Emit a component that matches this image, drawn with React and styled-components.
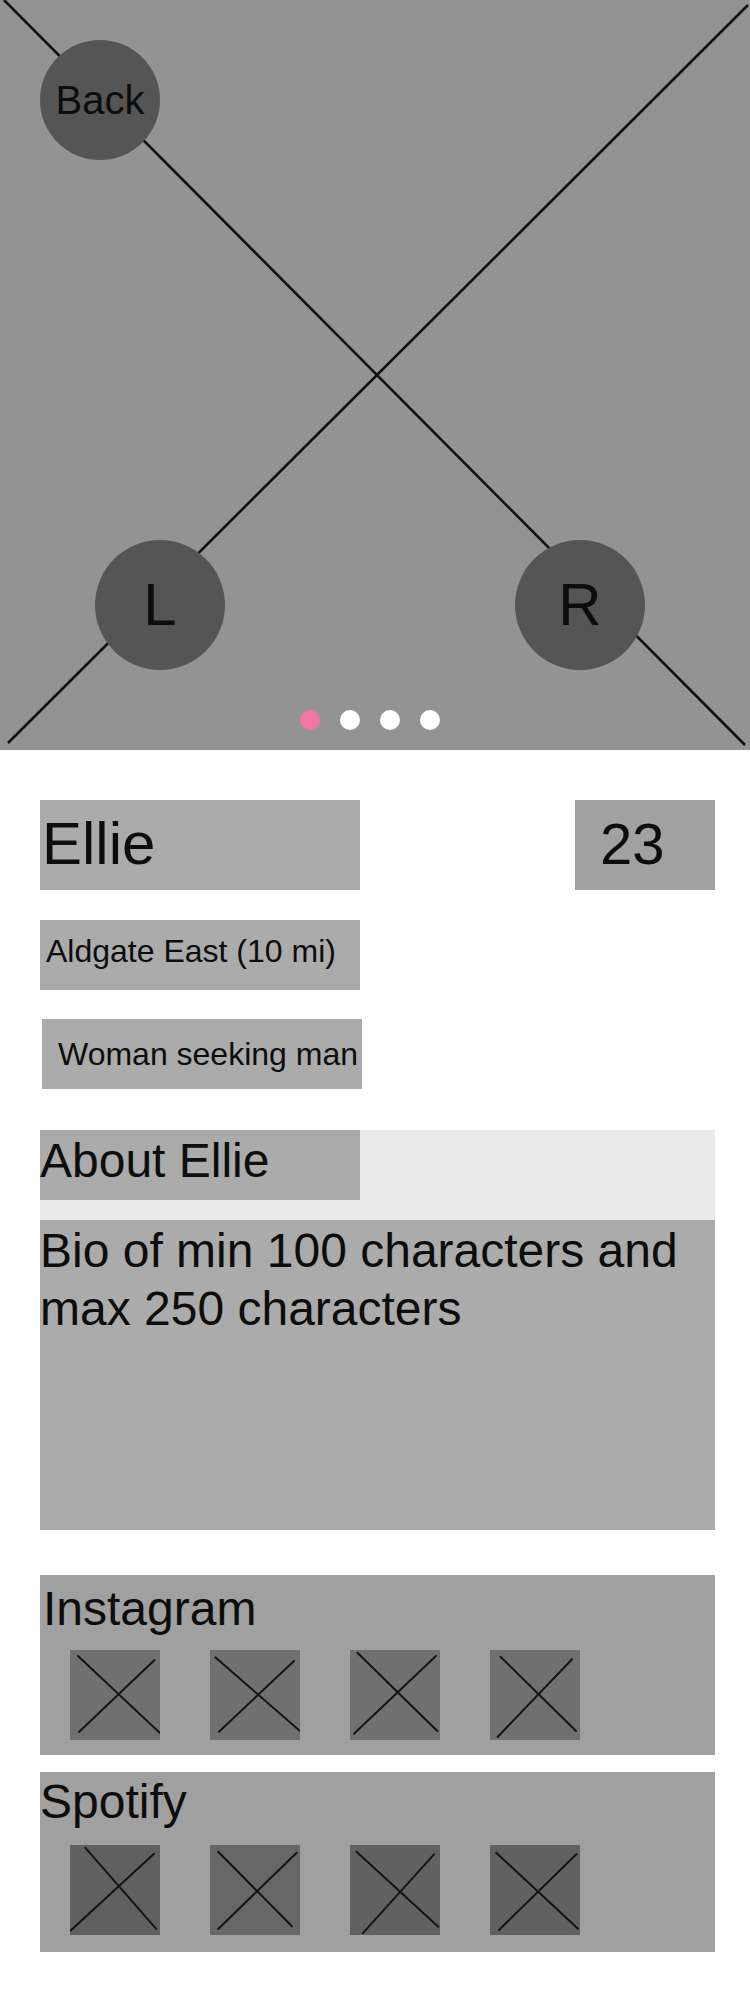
import React from "react";
import styled, { createGlobalStyle } from "styled-components";

const GlobalStyle = createGlobalStyle`
  html, body { margin: 0; padding: 0; background: #ffffff; }
  body { font-family: "Liberation Sans", Arial, Helvetica, sans-serif; color: #0d0d0d; }
  * { box-sizing: border-box; }
`;

const Page = styled.div`
  width: 750px;
  background: #ffffff;
  padding-bottom: 48px;
`;

/* ---------- Hero / photo placeholder ---------- */
const Hero = styled.header`
  position: relative;
  height: 750px;
  background: #939393;
  display: flex;
  flex-direction: column;
  padding: 40px 0 20px;
`;

const HeroCross = styled.svg`
  position: absolute;
  inset: 0;
  width: 100%;
  height: 100%;
  pointer-events: none;
`;

const RoundButton = styled.button`
  position: relative;
  width: ${(p) => p.$size}px;
  height: ${(p) => p.$size}px;
  border-radius: 50%;
  border: none;
  padding: 0;
  background: #555555;
  color: #0d0d0d;
  font-family: "Liberation Sans", Arial, sans-serif;
  font-size: ${(p) => p.$font}px;
  line-height: 1;
  display: flex;
  align-items: center;
  justify-content: center;
  cursor: pointer;
`;

const BackRow = styled.div`
  display: flex;
  padding-left: 40px;
`;

const NavRow = styled.div`
  margin-top: auto;
  display: flex;
  justify-content: space-between;
  padding: 0 105px 0 95px;
`;

const DotRow = styled.div`
  position: relative;
  margin-top: 40px;
  display: flex;
  justify-content: center;
  gap: 20px;
  padding-right: 10px;
`;

const Dot = styled.span`
  width: 20px;
  height: 20px;
  border-radius: 50%;
  background: ${(p) => (p.$active ? "#f075a9" : "#ffffff")};
`;

/* ---------- Profile details ---------- */
const Details = styled.section`
  display: flex;
  flex-direction: column;
  padding: 50px 35px 0 40px;
`;

const NameRow = styled.div`
  display: flex;
  justify-content: space-between;
  height: 90px;
`;

const BigField = styled.div`
  width: ${(p) => p.$width}px;
  height: 90px;
  background: ${(p) => p.$bg};
  display: flex;
  align-items: center;
  padding: 0 0 4px ${(p) => p.$pad}px;
  font-size: ${(p) => p.$font}px;
`;

const Chip = styled.div`
  width: 320px;
  height: 70px;
  margin-top: ${(p) => p.$top}px;
  margin-left: ${(p) => p.$indent}px;
  padding: 0 0 ${(p) => p.$lift}px ${(p) => p.$pad}px;
  background: #ababab;
  display: flex;
  align-items: center;
  font-size: 32px;
  white-space: nowrap;
`;

const AboutBar = styled.div`
  margin-top: 41px;
  height: 90px;
  background: #eaeaea;
`;

const AboutTitle = styled.h2`
  margin: 0;
  width: 320px;
  height: 70px;
  padding-top: 3px;
  background: #ababab;
  font-size: 48px;
  font-weight: 400;
  line-height: 55px;
`;

const Bio = styled.p`
  margin: 0;
  height: 310px;
  padding-top: 2px;
  background: #ababab;
  font-size: 48px;
  line-height: 1.2;
`;

const Panel = styled.section`
  margin-top: ${(p) => p.$top}px;
  height: 180px;
  padding-top: ${(p) => p.$pad}px;
  background: #a0a0a0;
`;

const PanelTitle = styled.h3`
  margin: 0;
  padding-left: ${(p) => p.$indent}px;
  font-size: 48px;
  font-weight: 400;
  line-height: 55px;
`;

const Tiles = styled.div`
  margin-top: ${(p) => p.$gap}px;
  display: flex;
  gap: 50px;
  padding-left: 30px;
`;

const Tile = styled.div`
  width: 90px;
  height: 90px;
  background: ${(p) => p.$shade};
  display: flex;
`;

const TileCross = styled.svg`
  width: 90px;
  height: 90px;
  display: block;
`;

const instagram = [
  { shade: "#707070", a: [8, 6, 90, 83], b: [84.5, 10, 9, 82] },
  { shade: "#707070", a: [5.3, 7.3, 90, 81], b: [84, 11, 9, 81.7] },
  { shade: "#707070", a: [7.4, 2.7, 87.3, 81], b: [85.9, 6, 4, 83.7] },
  { shade: "#707070", a: [10.5, 6.7, 86, 81], b: [82, 9.3, 7.6, 87] },
];

const spotify = [
  { shade: "#606060", a: [15.2, 2.7, 86, 83.7], b: [84, 8.7, 0.5, 85.7] },
  { shade: "#676767", a: [8.2, 6.7, 81.9, 81.3], b: [86.7, 7.7, 8.2, 84] },
  { shade: "#616161", a: [6.5, 6.7, 88.3, 81.7], b: [84, 9.3, 12.7, 88.3] },
  { shade: "#616161", a: [6.2, 7.7, 88, 83.7], b: [86.6, 9, 9, 85] },
];

function PhotoTile({ shade, a, b }) {
  return (
    <Tile $shade={shade}>
      <TileCross viewBox="0 0 90 90">
        <line x1={a[0]} y1={a[1]} x2={a[2]} y2={a[3]} stroke="#141414" strokeWidth="2" strokeLinecap="round" />
        <line x1={b[0]} y1={b[1]} x2={b[2]} y2={b[3]} stroke="#141414" strokeWidth="2" strokeLinecap="round" />
      </TileCross>
    </Tile>
  );
}

function MediaPanel({ title, items, top, pad, gap, indent }) {
  return (
    <Panel $top={top} $pad={pad}>
      <PanelTitle $indent={indent}>{title}</PanelTitle>
      <Tiles $gap={gap}>
        {items.map((it, i) => (
          <PhotoTile key={i} {...it} />
        ))}
      </Tiles>
    </Panel>
  );
}

export default function App() {
  return (
    <Page>
      <GlobalStyle />
      <Hero>
        <HeroCross viewBox="0 0 750 750">
          <line x1="4" y1="0" x2="745" y2="745" stroke="#111" strokeWidth="2.6" />
          <line x1="8" y1="743" x2="748" y2="5" stroke="#111" strokeWidth="2.6" />
        </HeroCross>
        <BackRow>
          <RoundButton $size={120} $font={40}>Back</RoundButton>
        </BackRow>
        <NavRow>
          <RoundButton $size={130} $font={60}>L</RoundButton>
          <RoundButton $size={130} $font={60}>R</RoundButton>
        </NavRow>
        <DotRow>
          <Dot $active />
          <Dot />
          <Dot />
          <Dot />
        </DotRow>
      </Hero>

      <Details>
        <NameRow>
          <BigField $width={320} $bg="#ababab" $pad={2} $font={60}>Ellie</BigField>
          <BigField $width={140} $bg="#a1a1a1" $pad={25} $font={58}>23</BigField>
        </NameRow>
        <Chip $top={30} $indent={0} $pad={6} $lift={8}>Aldgate East (10 mi)</Chip>
        <Chip $top={29} $indent={2} $pad={16} $lift={0}>Woman seeking man</Chip>

        <AboutBar>
          <AboutTitle>About Ellie</AboutTitle>
        </AboutBar>
        <Bio>Bio of min 100 characters and max 250 characters</Bio>

        <MediaPanel title="Instagram" items={instagram} top={45} pad={6} gap={14} indent={3} />
        <MediaPanel title="Spotify" items={spotify} top={17} pad={2} gap={16} indent={0} />
      </Details>
    </Page>
  );
}
